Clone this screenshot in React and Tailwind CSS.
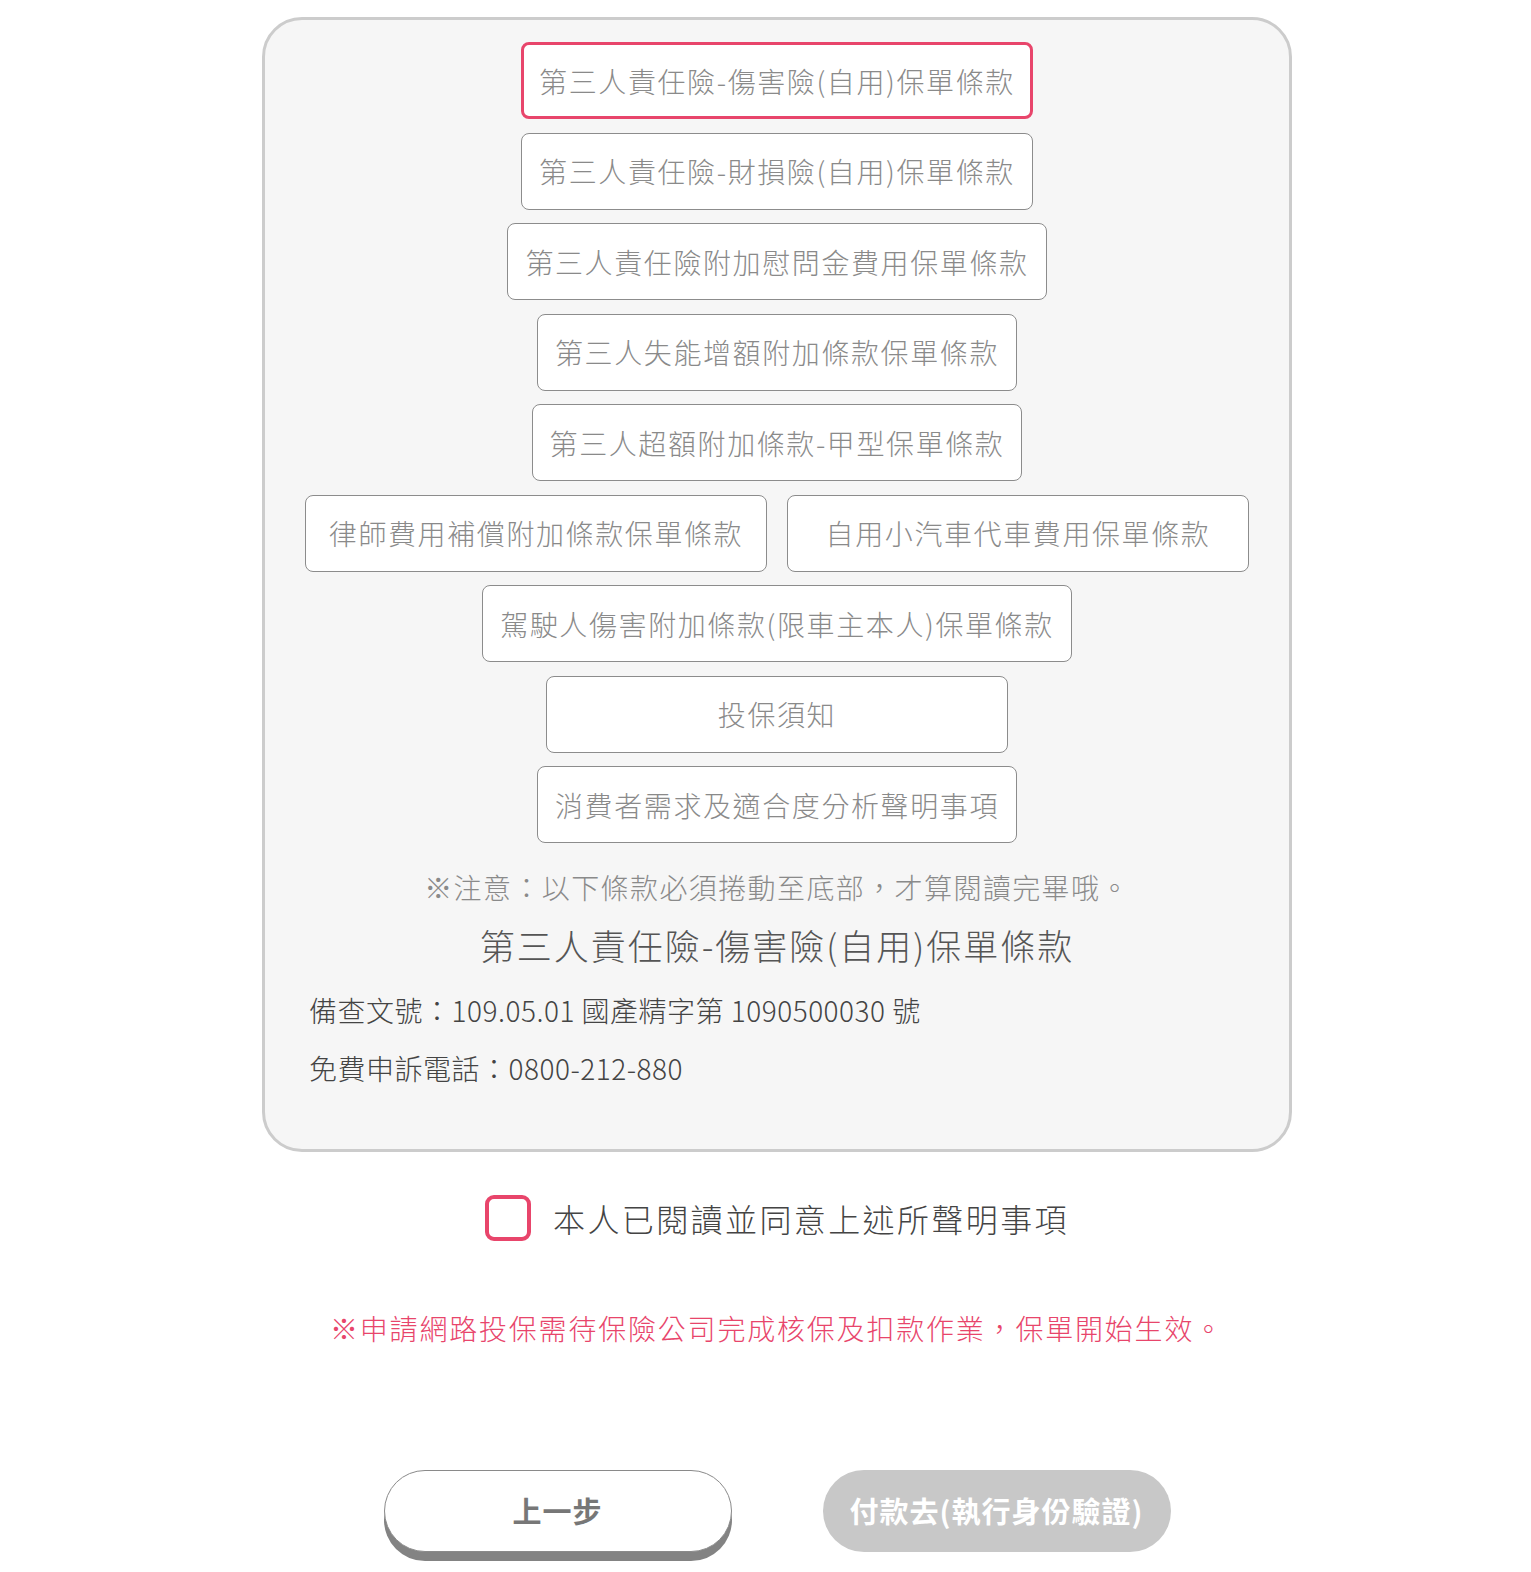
import { useState } from 'react';

const clauses = [
  ['第三人責任險-傷害險(自用)保單條款'],
  ['第三人責任險-財損險(自用)保單條款'],
  ['第三人責任險附加慰問金費用保單條款'],
  ['第三人失能增額附加條款保單條款'],
  ['第三人超額附加條款-甲型保單條款'],
  ['律師費用補償附加條款保單條款', '自用小汽車代車費用保單條款'],
  ['駕駛人傷害附加條款(限車主本人)保單條款'],
  ['投保須知'],
  ['消費者需求及適合度分析聲明事項'],
];

function ClauseButton({ label, active, onClick }) {
  return (
    <button
      onClick={onClick}
      className={
        active
          ? 'h-[77px] min-w-[462px] px-[15px] bg-white rounded-[8px] border-[3px] border-[#e8456b] text-[28px] tracking-[1.6px] font-light text-[#8a8a8a]'
          : 'h-[77px] min-w-[462px] px-[17px] bg-white rounded-[8px] border border-[#8c8c8c] text-[28px] tracking-[1.6px] font-light text-[#8a8a8a]'
      }
    >
      {label}
    </button>
  );
}

export default function App() {
  const [selected, setSelected] = useState(clauses[0][0]);
  const [agreed, setAgreed] = useState(false);

  return (
    <div
      className="min-h-screen bg-white pl-[23px] pt-[17px] pb-[14px] flex flex-col items-center"
      style={{ fontFamily: '"Noto Sans CJK TC", "Noto Sans", sans-serif' }}
    >
      <div className="w-[1030px] bg-[#f6f6f6] border-[3px] border-[#cccccc] rounded-[40px] pt-[22px] pb-[52px] px-[41px]">
        <div className="flex flex-col items-center gap-[13.5px]">
          {clauses.map((row) => (
            <div key={row.join()} className="flex justify-center gap-[20px]">
              {row.map((label) => (
                <ClauseButton
                  key={label}
                  label={label}
                  active={selected === label}
                  onClick={() => setSelected(label)}
                />
              ))}
            </div>
          ))}
        </div>

        <p className="mt-[26px] text-center text-[28px] leading-[36px] tracking-[1.4px] font-light text-[#8a8a8a]">
          ※注意：以下條款必須捲動至底部，才算閱讀完畢哦。
        </p>
        <h2 className="mt-[16px] text-center text-[35px] leading-[48px] tracking-[2px] font-light text-[#555555]">
          {selected}
        </h2>
        <div className="mt-[12px] pl-[3px] text-[28px] leading-[58px] tracking-[0.5px] font-light text-[#444444]">
          <p>備查文號：109.05.01 國產精字第 1090500030 號</p>
          <p>免費申訴電話：0800-212-880</p>
        </div>
      </div>

      <label className="mt-[43px] flex items-center gap-[22px] cursor-pointer">
        <span
          onClick={() => setAgreed(!agreed)}
          className={
            agreed
              ? 'w-[46px] h-[46px] rounded-[9px] border-[4px] border-[#e8456b] bg-[#e8456b]'
              : 'w-[46px] h-[46px] rounded-[9px] border-[4px] border-[#e8456b] bg-white'
          }
        />
        <span className="text-[32px] leading-[46px] tracking-[2.4px] font-light text-[#444444]">
          本人已閱讀並同意上述所聲明事項
        </span>
      </label>

      <p className="mt-[67px] text-center text-[28px] leading-[40px] tracking-[1.8px] font-light text-[#e8456b]">
        ※申請網路投保需待保險公司完成核保及扣款作業，保單開始生效。
      </p>

      <div className="mt-[122px] flex gap-[91px]">
        <button className="w-[348px] h-[82px] rounded-full bg-white border border-[#8a8a8a] shadow-[0_9px_0_#838383] text-[29px] font-bold tracking-[1px] text-[#777777]">
          上一步
        </button>
        <button className="w-[348px] h-[82px] rounded-full bg-[#c8c8c8] text-[29px] font-bold tracking-[1px] text-white">
          付款去(執行身份驗證)
        </button>
      </div>
    </div>
  );
}
